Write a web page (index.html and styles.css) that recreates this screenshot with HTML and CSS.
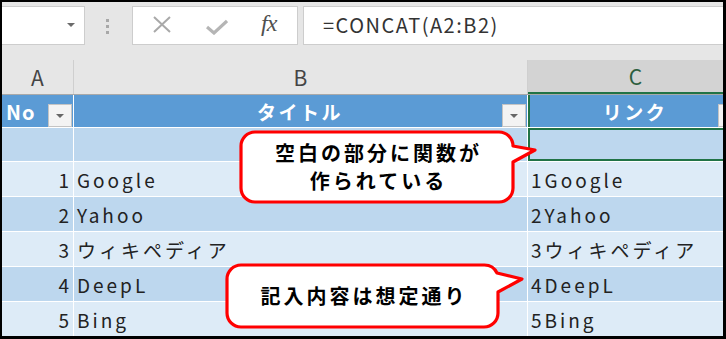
FILE: index.html
```html
<!DOCTYPE html>
<html lang="ja">
<head>
<meta charset="utf-8">
<title>CONCAT</title>
<link rel="stylesheet" href="styles.css">
</head>
<body>
<div class="screen">
  <div class="toolbar">
    <div class="namebox"><span class="caret"></span></div>
    <div class="grip"><i></i><i></i><i></i></div>
    <div class="fxbtns">
      <svg class="ico-x" width="20" height="18" viewBox="0 0 20 18"><path d="M2 1 L18 16 M18 1 L2 16" stroke="#a9a9a9" stroke-width="2" fill="none"/></svg>
      <svg class="ico-ok" width="22" height="16" viewBox="0 0 22 16"><path d="M1 8 L8 14 L21 2" stroke="#b5b5b5" stroke-width="3.2" fill="none"/></svg>
      <span class="fx">fx</span>
    </div>
    <div class="formula">=CONCAT(A2:B2)</div>
  </div>

  <div class="sheet">
    <div class="row colhead">
      <div class="cell a">A</div>
      <div class="cell b">B</div>
      <div class="cell c">C</div>
    </div>
    <div class="row thead">
      <div class="cell a"><span class="htext">No</span><span class="filter"></span></div>
      <div class="cell b"><span class="htext">タイトル</span><span class="filter"></span></div>
      <div class="cell c"><span class="htext">リンク</span><span class="filter"></span></div>
    </div>
    <div class="row dark short">
      <div class="cell a"></div>
      <div class="cell b"></div>
      <div class="cell c selected"></div>
    </div>
    <div class="row light">
      <div class="cell a">1</div>
      <div class="cell b">Google</div>
      <div class="cell c">1Google</div>
    </div>
    <div class="row dark">
      <div class="cell a">2</div>
      <div class="cell b">Yahoo</div>
      <div class="cell c">2Yahoo</div>
    </div>
    <div class="row light">
      <div class="cell a">3</div>
      <div class="cell b">ウィキペディア</div>
      <div class="cell c">3ウィキペディア</div>
    </div>
    <div class="row dark">
      <div class="cell a">4</div>
      <div class="cell b">DeepL</div>
      <div class="cell c">4DeepL</div>
    </div>
    <div class="row light">
      <div class="cell a">5</div>
      <div class="cell b">Bing</div>
      <div class="cell c">5Bing</div>
    </div>
  </div>

  <svg class="overlay" width="726" height="339" viewBox="0 0 726 339">
    <path d="M255 132 H499 A14 14 0 0 1 513 146 L535 150 L513 162 V188 A14 14 0 0 1 499 202 H255 A14 14 0 0 1 241 188 V146 A14 14 0 0 1 255 132 Z" fill="#fff" stroke="#ff0000" stroke-width="3.2" stroke-linejoin="round"/>
    <path d="M241 265 H484 A14 14 0 0 1 497 273 L522 279 L498 292 V313 A14 14 0 0 1 484 327 H241 A14 14 0 0 1 227 313 V279 A14 14 0 0 1 241 265 Z" fill="#fff" stroke="#ff0000" stroke-width="3.2" stroke-linejoin="round"/>
  </svg>
  <div class="note note1"><span>空白の部分に関数が</span><span>作られている</span></div>
  <div class="note note2"><span>記入内容は想定通り</span></div>
</div>
</body>
</html>
```

FILE: styles.css
```css
* { box-sizing: border-box; margin: 0; padding: 0; }
html, body { width: 726px; height: 339px; overflow: hidden; background: #fff; }
body { font-family: "Noto Sans CJK JP", "Noto Sans", sans-serif; }

.screen {
  position: relative;
  width: 726px;
  height: 339px;
  border: solid #000;
  border-width: 2px 3px 3px 2px;
  background: #e6e6e6;
  overflow: hidden;
}

/* formula bar */
.toolbar { display: flex; align-items: flex-start; height: 43px; padding-top: 4px; }
.namebox {
  width: 84px; height: 39px; margin-left: -1px;
  background: #fff; border: 1px solid #cdcdcd;
  display: flex; justify-content: flex-end; align-items: center;
  padding-right: 9px;
}
.caret { width: 0; height: 0; border-left: 4px solid transparent; border-right: 4px solid transparent; border-top: 4px solid #6b6b6b; margin-top: -2px; }
.grip { margin-left: 21px; margin-top: 13px; display: flex; flex-direction: column; gap: 3px; }
.grip i { display: block; width: 3px; height: 3px; background: #a8a8a8; }
.fxbtns {
  margin-left: 23px; width: 166px; height: 39px;
  background: #fff; border: 1px solid #cdcdcd;
  display: flex; align-items: center; padding-left: 19px;
}
.ico-x { margin-top: -1px; }
.ico-ok { margin-left: 34px; margin-top: 2px; }
.fx { margin-left: 33px; font-family: "Liberation Serif", serif; font-style: italic; font-size: 24px; color: #505050; margin-top: -4px; letter-spacing: -1px; }
.formula {
  margin-left: 5px; flex: 1; height: 39px;
  background: #fff; border: 1px solid #cdcdcd; border-right: none;
  padding-left: 19px; font-size: 20px; line-height: 36px; color: #333;
  letter-spacing: 1.5px;
}

/* sheet */
.sheet { margin-top: 15px; }
.row { display: flex; height: 35px; border-bottom: 1px solid #fff; }
.cell { height: 100%; border-right: 1px solid #fff; display: flex; align-items: center; font-size: 19px; color: #222; letter-spacing: 3px; white-space: nowrap; }
.cell.a { width: 72px; flex: none; justify-content: flex-end; padding-right: 1px; }
.cell.b { width: 454px; flex: none; padding-left: 3px; }
.cell.c { width: 216px; flex: none; padding-left: 3px; }

.colhead { background: #e6e6e6; border-bottom: 1px solid #a9a9a9; }
.colhead .cell { justify-content: center; font-size: 21px; color: #444; letter-spacing: 0; border-right: 1px solid #cfcfcf; padding: 0; }
.colhead .cell.c { background: #d3d3d3; color: #2d5e3e; border-bottom: 2px solid #217346; }

.thead { height: 33px; background: #5b9bd5; }
.thead .cell { color: #fff; font-weight: bold; font-size: 19px; letter-spacing: 2.5px; align-items: stretch; }
.thead .htext { display: flex; align-items: center; }
.thead .cell.a { justify-content: space-between; padding: 0 1px 0 4px; letter-spacing: 1px; font-size: 20px; }
.thead .cell.b, .thead .cell.c { padding: 0 1px 0 24px; }
.thead .cell.b .htext, .thead .cell.c .htext { flex: 1; justify-content: center; }
.thead .cell.c { box-shadow: inset 2px 0 0 #217346; }
.filter {
  align-self: flex-end; width: 24px; height: 23px; flex: none;
  background: #f3f3f3; border: 1px solid #c4c4c4;
  display: flex; align-items: center; justify-content: center;
}
.filter::before { content: ""; border-left: 4px solid transparent; border-right: 4px solid transparent; border-top: 4px solid #666; }

.dark { background: #bdd7ee; }
.light { background: #ddebf7; }
.short { height: 34px; }
.cell.selected { box-shadow: inset 0 0 0 2px #217346; }

/* callouts */
.overlay { position: absolute; left: -2px; top: -2px; }
.note {
  position: absolute; display: flex; flex-direction: column; align-items: center; justify-content: center;
  font-weight: bold; font-size: 20px; color: #000; letter-spacing: 3px; line-height: 28px; padding-left: 3px;
}
.note1 { left: 239px; top: 130px; width: 272px; height: 70px; }
.note2 { left: 225px; top: 263px; width: 271px; height: 62px; }
```
